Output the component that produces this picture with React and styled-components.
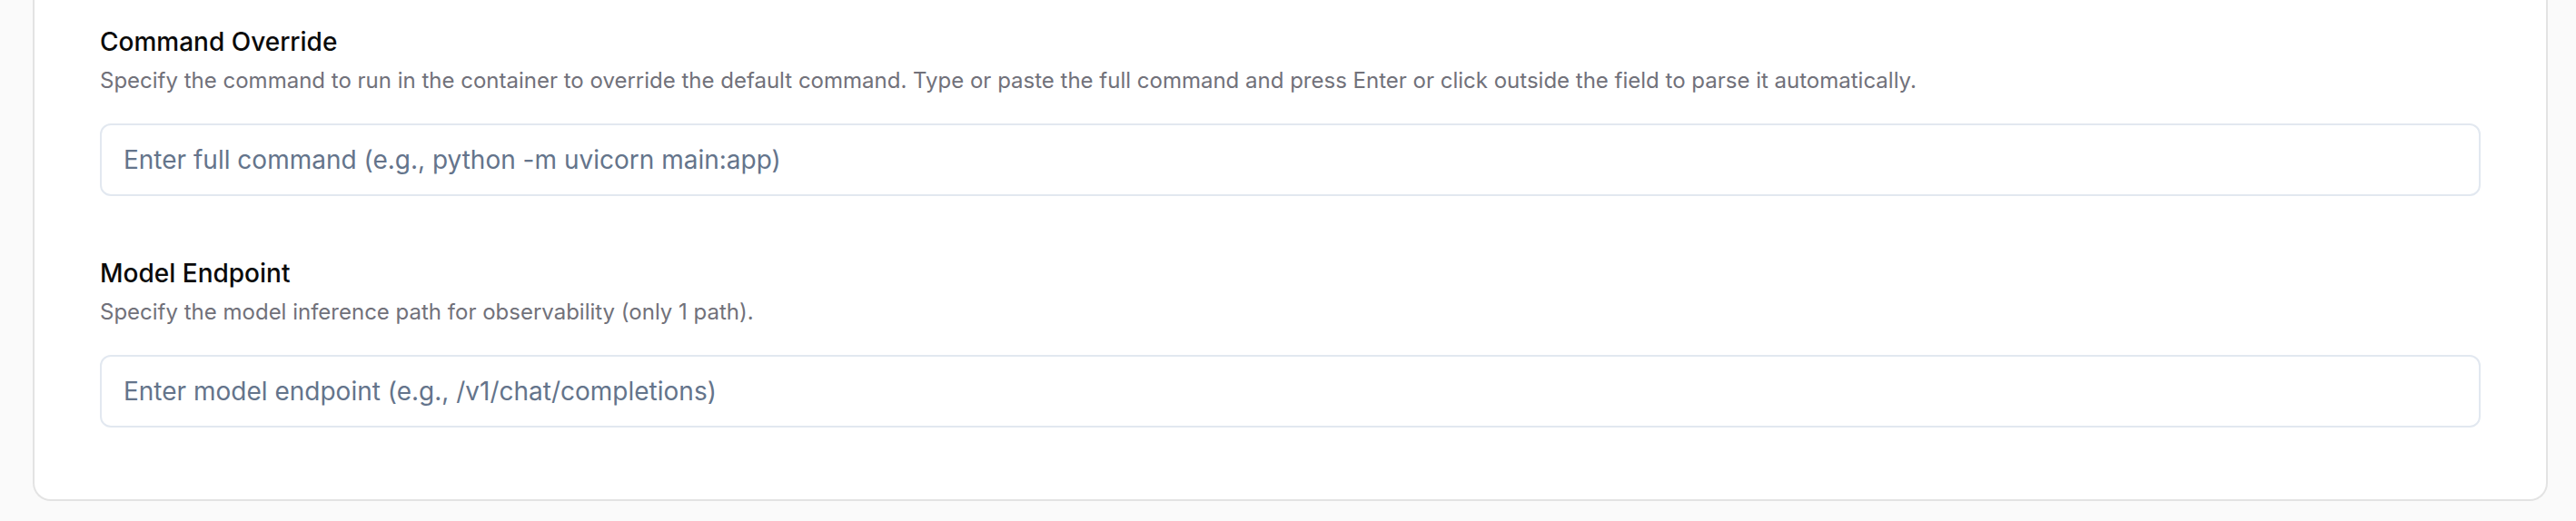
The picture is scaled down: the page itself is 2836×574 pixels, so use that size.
import styled, { createGlobalStyle } from 'styled-components'

const GlobalStyle = createGlobalStyle`
    html, body {
        margin: 0;
        padding: 0;
        background: #fafafa;
        font-family: Inter, "Noto Sans", "Liberation Sans", sans-serif;
    }
    * {
        box-sizing: border-box;
    }
`

const fields = [
    {
        id: 'command',
        label: 'Command Override',
        help: 'Specify the command to run in the container to override the default command. Type or paste the full command and press Enter or click outside the field to parse it automatically.',
        placeholder: 'Enter full command (e.g., python -m uvicorn main:app)',
    },
    {
        id: 'endpoint',
        label: 'Model Endpoint',
        help: 'Specify the model inference path for observability (only 1 path).',
        placeholder: 'Enter model endpoint (e.g., /v1/chat/completions)',
    },
]

const App = () => {
    return (
        <Page>
            <GlobalStyle />
            <Card>
                {fields.map((f) => (
                    <Field key={f.id}>
                        <Label htmlFor={f.id}>{f.label}</Label>
                        <Help>{f.help}</Help>
                        <Input id={f.id} type="text" placeholder={f.placeholder} />
                    </Field>
                ))}
            </Card>
        </Page>
    )
}

const Page = styled.div`
    width: 2836px;
    height: 574px;
    padding: 0 31px 22px 36px;
    display: flex;
    flex-direction: column;
    justify-content: flex-end;
`
const Card = styled.div`
    flex: 1;
    background: #ffffff;
    border: 2px solid #e3e3e3;
    border-top: none;
    border-radius: 0 0 20px 20px;
    padding: 26px 72px 79px 72px;
    display: flex;
    flex-direction: column;
    justify-content: flex-end;
    gap: 65px;
`
const Field = styled.div`
    display: flex;
    flex-direction: column;
`
const Label = styled.label`
    font-size: 28px;
    line-height: 40px;
    font-weight: 500;
    color: #0a0a0a;
`
const Help = styled.p`
    margin: 7px 0 31px;
    font-size: 24px;
    line-height: 32px;
    color: #71717a;
`
const Input = styled.input`
    height: 80px;
    width: 100%;
    padding: 0 24px;
    border: 2px solid #e2e8f0;
    border-radius: 12px;
    background: #ffffff;
    font-family: inherit;
    font-size: 28px;
    color: #0f172a;
    outline: none;
    &::placeholder {
        color: #64748b;
    }
`

export default App
